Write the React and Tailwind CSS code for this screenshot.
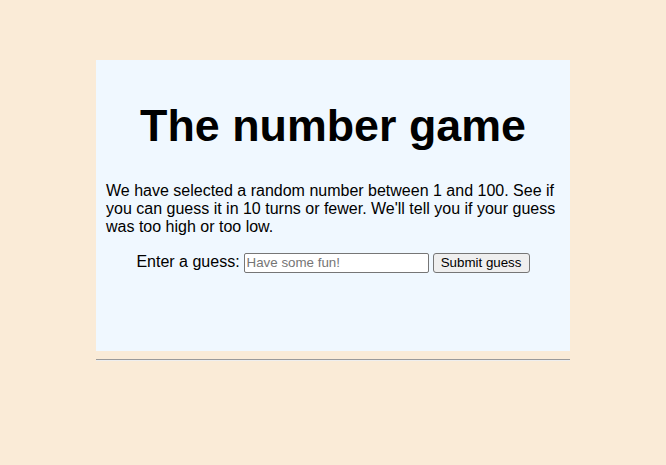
import React from "react";

export default function App() {
  return (
    <div className="min-h-[465px] bg-[#faebd7] pt-[60px] font-['Liberation_Sans',Arial,sans-serif] text-black">
      <div className="mx-auto w-[474px]">
        <div className="bg-[#f0f8ff] p-[10px]">
          <h1 className="mt-[30px] mb-[30px] text-center text-[44.8px] font-bold leading-[1.15]">
            The number game
          </h1>
          <p className="text-[16px] leading-[18.4px]">
            We have selected a random number between 1 and 100. See if you can
            guess it in 10 turns or fewer. We'll tell you if your guess was too
            high or too low.
          </p>
          <div className="mt-4 flex items-baseline justify-center gap-[4px] text-[16px] leading-[18.4px]">
            <label htmlFor="guessField">Enter a guess:</label>
            <input
              id="guessField"
              type="text"
              placeholder="Have some fun!"
              className="h-[20px] w-[185px] rounded-[2px] border border-[#767676] bg-white px-[2px] text-[13.33px] placeholder:text-[#757575] outline-none"
            />
            <button
              type="button"
              className="h-[20px] w-[97px] rounded-[3px] border border-[#767676] bg-[#efefef] px-[6px] text-[13.33px] leading-none"
            >
              Submit guess
            </button>
          </div>
          <div className="h-[68px]" />
        </div>
        <hr className="mt-[8px] h-0 border-t border-b border-t-[#9a9a9a] border-b-[#eeeeee]" />
      </div>
    </div>
  );
}
